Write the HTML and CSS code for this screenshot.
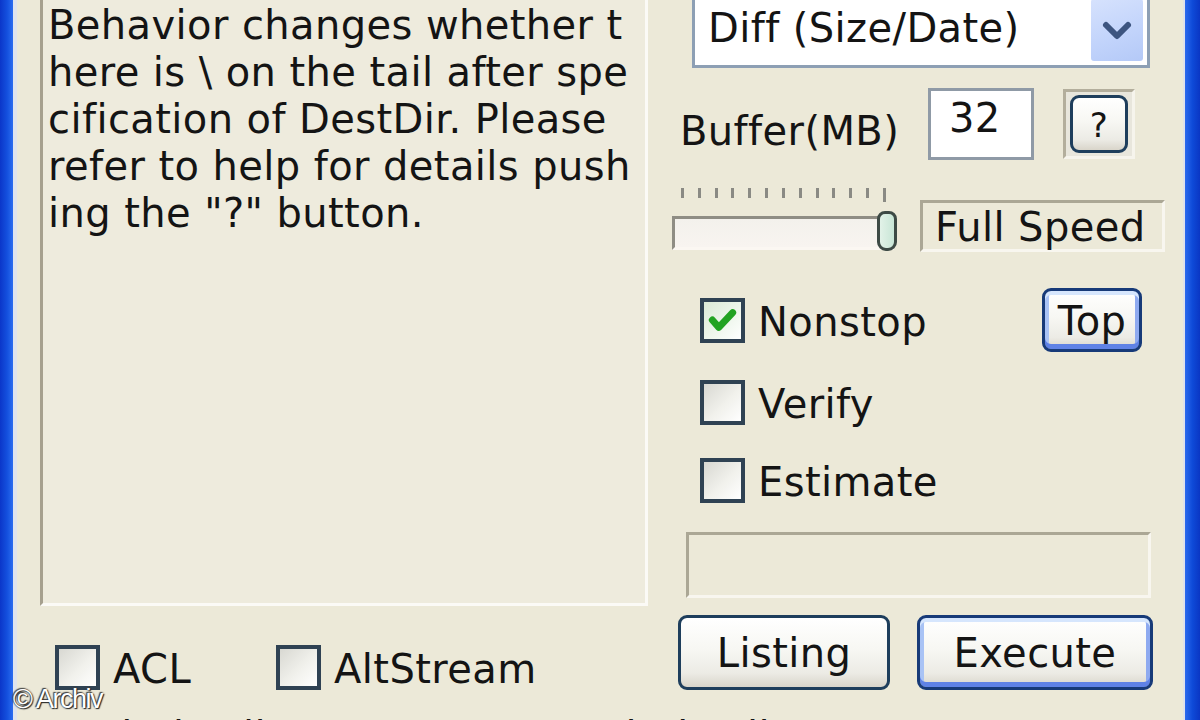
FILE: index.html
```html
<!DOCTYPE html>
<html>
<head>
<meta charset="utf-8">
<link rel="stylesheet" href="styles.css">
</head>
<body>
<div class="window">
  <div class="frame-left"></div>
  <div class="client">
    <div class="main">
      <div class="col-left">
        <div class="infobox">
          <div class="info-text">Behavior changes whether t<br>here is \ on the tail after spe<br>cification of DestDir. Please<br>refer to help for details push<br>ing the "?" button.</div>
        </div>
        <div class="opt-row">
          <div class="chk chk-acl"><span class="box"></span><span class="lbl">ACL</span></div>
          <div class="chk chk-alt"><span class="box"></span><span class="lbl">AltStream</span></div>
        </div>
      </div>
      <div class="col-right">
        <div class="combo">
          <span class="combo-text">Diff (Size/Date)</span>
          <span class="combo-btn">
            <svg viewBox="0 0 52 60" width="52" height="60"><path d="M15 26 L26 37 L37 26" fill="none" stroke="#3d5580" stroke-width="6" stroke-linecap="round" stroke-linejoin="round"/></svg>
          </span>
        </div>
        <div class="buffer-row">
          <span class="lbl buffer-lbl">Buffer(MB)</span>
          <span class="edit">32</span>
          <span class="help-frame"><span class="btn help-btn">?</span></span>
        </div>
        <div class="slider-row">
          <div class="slider">
            <div class="ticks">
              <i></i><i></i><i></i><i></i><i></i><i></i><i></i><i></i><i></i><i></i><i></i><i></i><i class="end"></i>
            </div>
            <div class="track"><span class="thumb"></span></div>
          </div>
          <div class="static speed">Full Speed</div>
        </div>
        <div class="nonstop-row">
          <div class="chk"><span class="box checked">
            <svg viewBox="0 0 40 40" width="40" height="40"><path d="M9 20 L16 28 L31 12" fill="none" stroke="#22a322" stroke-width="7.5" stroke-linecap="round" stroke-linejoin="round"/></svg>
          </span><span class="lbl">Nonstop</span></div>
          <span class="btn btn-default top-btn">Top</span>
        </div>
        <div class="chk verify-row"><span class="box"></span><span class="lbl">Verify</span></div>
        <div class="chk estimate-row"><span class="box"></span><span class="lbl">Estimate</span></div>
        <div class="static empty-box"></div>
        <div class="action-row">
          <span class="btn listing-btn">Listing</span>
          <span class="btn btn-default execute-btn">Execute</span>
        </div>
      </div>
    </div>
    <div class="clip-row"><span class="clip-a">Include Filter</span><span class="clip-b">Exclude Filter</span></div>
  </div>
  <div class="frame-right"></div>
  <div class="watermark">© Archiv</div>
</div>
</body>
</html>
```

FILE: styles.css
```css
html, body {
  margin: 0;
  padding: 0;
  width: 1200px;
  height: 720px;
  overflow: hidden;
  background: #ece9d8;
}

.window {
  position: relative;
  display: flex;
  width: 1200px;
  height: 720px;
  font-family: "DejaVu Sans", "Liberation Sans", sans-serif;
  font-size: 40px;
  line-height: 47px;
  letter-spacing: 0.4px;
  color: #141414;
}

.frame-left {
  width: 13px;
  flex: none;
  background: linear-gradient(to right, #0b36c9 0%, #1450de 55%, #2b6cf0 100%);
  border-right: 4px solid #dfe4ee;
}

.frame-right {
  width: 15px;
  flex: none;
  background: linear-gradient(to right, #2a69ee 0%, #0e4ad8 50%, #0a36c4 100%);
  border-left: 2px solid #dfe2ea;
}

.client {
  flex: 1;
  overflow: hidden;
  background: #ece9d8;
  display: flex;
  flex-direction: column;
}

.main {
  display: flex;
  height: 690px;
  flex: none;
}

/* left column */
.col-left {
  width: 632px;
  padding-left: 23px;
  flex: none;
  display: flex;
  flex-direction: column;
}

.infobox {
  box-sizing: border-box;
  margin-top: -10px;
  height: 620px;
  width: 608px;
  border-left: 3px solid #a6a08e;
  border-top: 3px solid #a6a08e;
  border-right: 3px solid #fbfaf6;
  border-bottom: 3px solid #fbfaf6;
  background: #eeebdd;
  padding: 9px 0 0 5px;
}

.info-text {
  white-space: nowrap;
}

.opt-row {
  display: flex;
  margin-top: 39px;
  height: 45px;
}

.chk {
  display: flex;
  align-items: center;
  height: 45px;
}

.box {
  box-sizing: border-box;
  width: 45px;
  height: 45px;
  flex: none;
  border: 4px solid #2f4253;
  background: linear-gradient(135deg, #d8d8d2 0%, #f1f1ec 55%, #ffffff 100%);
  display: flex;
  align-items: center;
  justify-content: center;
}

.box.checked {
  background: linear-gradient(135deg, #dbe9d6 0%, #eef6ec 55%, #ffffff 100%);
}

.lbl {
  padding-left: 13px;
  padding-top: 4px;
  white-space: nowrap;
}

.chk-acl {
  margin-left: 15px;
}

.chk-alt {
  margin-left: 85px;
}

/* right column */
.col-right {
  width: 495px;
  flex: none;
  display: flex;
  flex-direction: column;
}

.combo {
  box-sizing: border-box;
  margin-top: -10px;
  margin-left: 20px;
  width: 458px;
  height: 78px;
  border: 3px solid #8d9fb4;
  background: #ffffff;
  display: flex;
  align-items: flex-end;
  justify-content: space-between;
  padding: 0 4px 4px 13px;
}

.combo-text {
  padding-bottom: 9px;
  white-space: nowrap;
}

.combo-btn {
  width: 52px;
  height: 62px;
  border-radius: 3px;
  background: linear-gradient(160deg, #d6e2fd 0%, #c1d3fb 60%, #b4c9f7 100%);
  display: flex;
}

.buffer-row {
  display: flex;
  align-items: center;
  margin-top: 20px;
  height: 72px;
}

.buffer-lbl {
  box-sizing: border-box;
  width: 256px;
  padding-left: 8px;
  padding-top: 14px;
}

.edit {
  box-sizing: border-box;
  width: 106px;
  height: 72px;
  border: 3px solid #8f9aa6;
  background: #ffffff;
  padding: 4px 0 0 18px;
}

.help-frame {
  box-sizing: border-box;
  margin-left: 29px;
  width: 72px;
  height: 70px;
  border-top: 3px solid #b3ae9c;
  border-left: 3px solid #b3ae9c;
  border-right: 3px solid #f6f4ec;
  border-bottom: 3px solid #f6f4ec;
  background: #e8e6dc;
  display: flex;
  align-items: center;
  justify-content: center;
}

.btn {
  box-sizing: border-box;
  display: flex;
  align-items: center;
  justify-content: center;
  border: 3px solid #1e3e5c;
  border-radius: 9px;
  background: linear-gradient(to bottom, #ffffff 0%, #f7f7f3 45%, #ecebe5 80%, #d9d5ca 100%);
  white-space: nowrap;
}

.btn-default {
  border-color: #173a78;
  box-shadow: inset 0 4px 0 #d6e6fd, inset 0 -5px 0 #5f82e6, inset 4px 0 0 #a9c3f5, inset -4px 0 0 #8eaaf0;
}

.help-btn {
  width: 58px;
  height: 58px;
  font-size: 34px;
  padding-top: 2px;
}

.slider-row {
  display: flex;
  margin-top: 25px;
  height: 67px;
}

.slider {
  width: 222px;
  flex: none;
  display: flex;
  flex-direction: column;
}

.ticks {
  display: flex;
  justify-content: space-between;
  padding: 3px 8px 0 9px;
  height: 14px;
}

.ticks i {
  display: block;
  width: 3px;
  height: 10px;
  background: #8a8a84;
}

.ticks i.end {
  height: 14px;
}

.track {
  box-sizing: border-box;
  margin-top: 14px;
  height: 34px;
  border-top: 3px solid #8f8d84;
  border-left: 3px solid #8f8d84;
  border-bottom: 3px solid #fbf7f2;
  background: linear-gradient(to bottom, #f3f1ec, #f8f4f0);
  display: flex;
  justify-content: flex-end;
  align-items: center;
}

.thumb {
  box-sizing: border-box;
  width: 20px;
  height: 40px;
  margin-right: -3px;
  margin-top: -4px;
  border: 3px solid #3d4a45;
  border-radius: 8px 8px 9px 9px;
  background: linear-gradient(to right, #e2f2e8, #c8e6d6);
}

.static {
  box-sizing: border-box;
  border-top: 3px solid #aba795;
  border-left: 3px solid #aba795;
  border-right: 3px solid #f8f6ef;
  border-bottom: 3px solid #f8f6ef;
  background: #ece9d8;
  white-space: nowrap;
}

.speed {
  margin-left: 26px;
  margin-top: 15px;
  width: 245px;
  height: 52px;
  padding: 1px 0 0 12px;
}

.nonstop-row {
  display: flex;
  align-items: center;
  justify-content: space-between;
  margin-top: 36px;
  height: 64px;
  margin-left: 28px;
  width: 442px;
}

.top-btn {
  width: 100px;
  height: 64px;
  padding-top: 2px;
}

.verify-row {
  margin-top: 28px;
  margin-left: 28px;
}

.estimate-row {
  margin-top: 33px;
  margin-left: 28px;
}

.empty-box {
  margin-top: 29px;
  margin-left: 14px;
  width: 465px;
  height: 66px;
}

.action-row {
  display: flex;
  margin-top: 17px;
  margin-left: 6px;
  height: 75px;
}

.listing-btn {
  width: 212px;
  height: 75px;
  padding-top: 2px;
}

.execute-btn {
  margin-left: 27px;
  width: 236px;
  height: 75px;
  padding-top: 2px;
}

.clip-row {
  display: flex;
  margin-top: 23px;
  white-space: nowrap;
}

.clip-a {
  margin-left: 44px;
}

.clip-b {
  margin-left: 230px;
}

.watermark {
  position: absolute;
  left: 13px;
  top: 685px;
  font-family: "Liberation Sans", Arial, sans-serif;
  font-size: 27px;
  line-height: 28px;
  letter-spacing: -1.5px;
  color: #ffffff;
  text-shadow: 0 0 2px #333, 1px 1px 1px #222, -1px -1px 1px #444;
}
```
